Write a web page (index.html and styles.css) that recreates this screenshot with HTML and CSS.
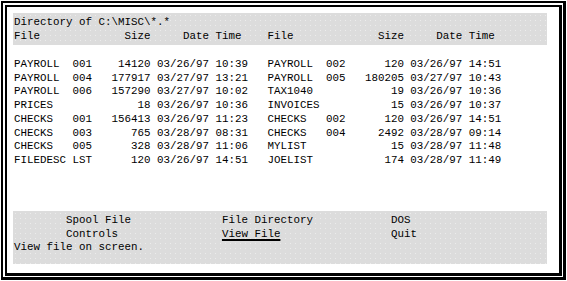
FILE: index.html
```html
<!DOCTYPE html>
<html lang="en">
<head>
    <meta charset="UTF-8">
    <title>Directory of C:\MISC\*.*</title>
    <link rel="stylesheet" href="styles.css">
</head>
<body>
    <div class="frame">
        <div class="screen">
            <!-- header bar -->
            <div class="bar head">
                <div class="line">Directory of C:\MISC\*.*</div>
                <div class="line">File             Size     Date Time    File             Size     Date Time</div>
            </div>

            <!-- file list: two entries per line -->
            <div class="listing">
                <div class="line">PAYROLL  001    14120 03/26/97 10:39   PAYROLL  002      120 03/26/97 14:51</div>
                <div class="line">PAYROLL  004   177917 03/27/97 13:21   PAYROLL  005   180205 03/27/97 10:43</div>
                <div class="line">PAYROLL  006   157290 03/27/97 10:02   TAX1040            19 03/26/97 10:36</div>
                <div class="line">PRICES             18 03/26/97 10:36   INVOICES           15 03/26/97 10:37</div>
                <div class="line">CHECKS   001   156413 03/26/97 11:23   CHECKS   002      120 03/26/97 14:51</div>
                <div class="line">CHECKS   003      765 03/28/97 08:31   CHECKS   004     2492 03/28/97 09:14</div>
                <div class="line">CHECKS   005      328 03/28/97 11:06   MYLIST             15 03/28/97 11:48</div>
                <div class="line">FILEDESC LST      120 03/26/97 14:51   JOELIST           174 03/28/97 11:49</div>
            </div>

            <!-- menu bar -->
            <div class="bar menu">
                <div class="line">        Spool File              File Directory            DOS</div>
                <div class="line">        Controls                <span class="current">View File</span>                 Quit</div>
                <div class="line">View file on screen.</div>
            </div>
        </div>
    </div>
</body>
</html>
```

FILE: styles.css
```css
html, body { height: 100%; }
body {
    margin: 1px;
    height: 279px;
    font-family: "Liberation Mono", "DejaVu Sans Mono", monospace;
    font-size: 10.83px;
    color: #000;
    background: #fff;
}

/* double black frame */
.frame {
    box-sizing: border-box;
    height: 100%;
    display: flex;
    border: solid #000;
    border-width: 2px 3px 3px 2px;
    padding: 2px 1px 1px 2px;
}
.screen {
    flex: 1;
    display: flex;
    flex-direction: column;
    border: solid #000;
    border-width: 2px 3px 3px 2px;
    padding: 6px 12px 9px 6px;
}

.line {
    white-space: pre;
    line-height: 13.5px;
}

/* grey dotted bars */
.bar {
    background-color: #dcdcdc;
    background-image: radial-gradient(circle, #ececec 0.7px, transparent 1px);
    background-size: 5px 5px;
    padding-left: 1px;
}
.head { padding-top: 3px; padding-bottom: 2px; }
.menu { margin-top: auto; padding-top: 3px; padding-bottom: 9.5px; }

.listing {
    margin-top: 13px;
    padding-left: 1px;
}
.listing .line { line-height: 13.7px; }

.current {
    text-decoration: underline;
    text-decoration-thickness: 2px;
    text-underline-offset: 2px;
}
```
